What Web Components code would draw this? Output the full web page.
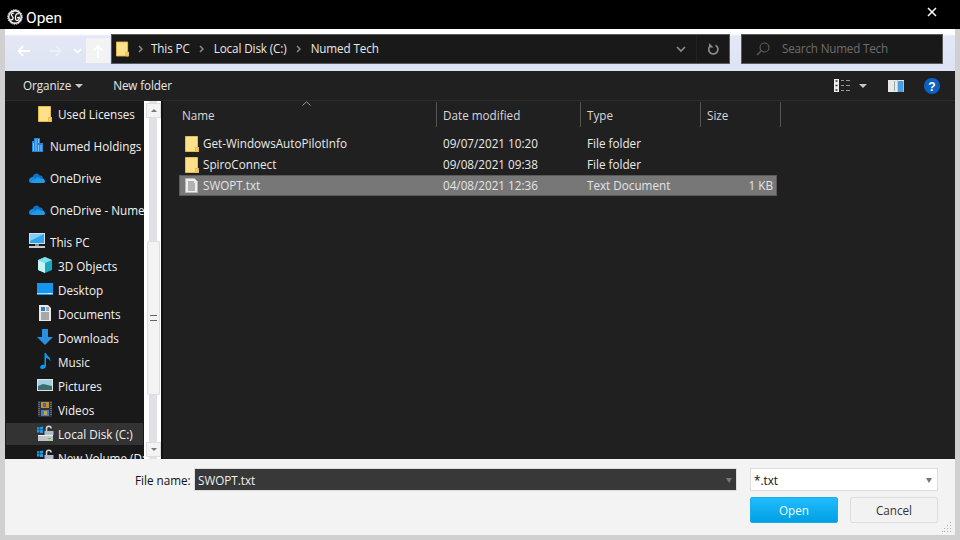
<!DOCTYPE html>
<html lang="en"><head><meta charset="utf-8"><title>Open</title>
<style>
html,body{margin:0;padding:0;background:#d0d0d0}
body{width:960px;height:540px;overflow:hidden;font:11.7px "Open Sans","Noto Sans",sans-serif}
</style></head><body>
<x-dialog>
  <x-titlebar slot="title">Open</x-titlebar>
  <x-navbar slot="nav"></x-navbar>
  <x-toolbar slot="tools"></x-toolbar>
  <x-sidebar slot="side"></x-sidebar>
  <x-filelist slot="main"></x-filelist>
  <x-footer slot="foot"></x-footer>
</x-dialog>
<script>
const FONT='"Open Sans","Noto Sans",sans-serif';
const FS='11.7px';
const folder=(w=14,h=16)=>`<svg width="${w}" height="${h}" viewBox="0 0 14 16" style="display:block;flex:none"><path d="M.5.5H12.500V11.500H13.500V15.500H.5Z" fill="#fde08a" stroke="#e8bd47"/><path d="M10.500 11.500H13.500V15.500H10.500Z" fill="#f3cd62" stroke="#e8bd47"/></svg>`;
const def=(name,css,html,init)=>customElements.define(name,class extends HTMLElement{
  constructor(){super();this.attachShadow({mode:'open'}).innerHTML=`<style>${css}</style>${html}`;}
  connectedCallback(){init&&init.call(this)}
});

def('x-dialog',`:host{display:grid;width:960px;height:540px;grid-template-rows:29px 42px 30px 358px 76px 5px;grid-template-columns:5px 950px 5px;background:#d0d0d0}
  ::slotted([slot=title]){grid-column:1/4;grid-row:1}
  ::slotted([slot=nav]){grid-column:2;grid-row:2}
  ::slotted([slot=tools]){grid-column:2;grid-row:3}
  ::slotted([slot=foot]){grid-column:2;grid-row:5}
  .body{grid-column:2;grid-row:4;display:flex;min-height:0}`,
 `<slot name="title"></slot><slot name="nav"></slot><slot name="tools"></slot><div class="body"><slot name="side"></slot><slot name="main"></slot></div><slot name="foot"></slot>`);

def('x-titlebar',`:host{display:flex;align-items:flex-start;background:#000;color:#fff;font:15.500px "Roboto",sans-serif;padding:0 0 0 7px}
  .t{flex:1;margin:9px 0 0 3px;line-height:18px}.x{width:10px;height:10px;margin:7px 23px 0 0}
  .l{margin-top:9px}
  svg{display:block}`,
 `<svg class="l" width="16" height="16" viewBox="0 0 16 16"><circle cx="8" cy="8" r="7" fill="#fff"/><circle cx="8" cy="8" r="7.300" fill="none" stroke="#fff" stroke-width="1" stroke-dasharray="1.300 1"/><circle cx="8" cy="8" r="5.600" fill="#1a1a1a"/><path d="M6.800 4.300C5 3.900 3.700 5.300 4.700 6.600 5.700 7.900 6.600 8.200 6 9.800 5.500 11.300 3.900 11 3.600 10M12 4.800C10.200 4 8.800 5.400 8.500 7.500 8.300 9.700 8.600 11.600 10.200 11.500 11.700 11.400 12.500 9.800 12.300 8.400 11.500 8.800 10.700 9 10 8.600" fill="none" stroke="#fff" stroke-width="1.200"/></svg><span class="t"><slot></slot></span>
 <svg class="x" viewBox="0 0 10 10"><path d="M1 1L9 9M9 1L1 9" stroke="#fff" stroke-width="1.500" fill="none"/></svg>`);

const sep=(l,r)=>`<svg style="margin:0 ${r}px 0 ${l}px;flex:none" width="5" height="8" viewBox="0 0 5 8"><path d="M1 1l3 3-3 3" fill="none" stroke="#8a8a8a" stroke-width="1.500"/></svg>`;
def('x-navbar',`:host{display:flex;align-items:flex-start;height:42px;background:linear-gradient(#ffffff 0,#ffffff 5px,#e4e8f6 7px,#dde3f3 100%);box-sizing:border-box;padding:5px 0 0 11px}
  .btns{display:flex;align-items:center;height:25px;margin-top:4px}
  .btns svg{display:block;flex:none}
  .up{width:24px;height:25px;background:#f3f3f3;display:flex;align-items:center;justify-content:center;margin-left:4px}
  .addr{width:619px;height:30px;margin-left:1px;background:#191919;border:1px solid #5a5a5a;box-sizing:border-box;display:flex;align-items:center;color:#e8e8e8;font:${FS} ${FONT};letter-spacing:-.12px;padding-left:4px;flex:none}
  .crumbs{display:flex;align-items:center;flex:1;height:100%}
  .crumbs span{padding-bottom:2px}
  .chev{margin-right:10px}
  .rf{width:33px;height:100%;border-left:1px solid #222;box-sizing:border-box;display:flex;align-items:center;justify-content:center}
  .search{width:202px;height:30px;margin-left:11px;background:#191919;border:1px solid #5a5a5a;box-sizing:border-box;display:flex;align-items:center;color:#6d6d6d;font:${FS} ${FONT};letter-spacing:-.2px;gap:12px;padding-left:14px;flex:none}
  .search span{padding-bottom:2px}`,
 `<div class="btns">
   <svg width="16" height="16" viewBox="0 0 16 16"><path d="M14 8H2.500M7 3.200L2.500 8 7 12.800" fill="none" stroke="#fff" stroke-width="1.800"/></svg>
   <svg width="16" height="16" viewBox="0 0 16 16" style="margin-left:15px"><path d="M2 8h11.500M9 3.200L13.500 8 9 12.800" fill="none" stroke="#eef0f8" stroke-width="1.800"/></svg>
   <svg width="9" height="6" viewBox="0 0 9 6" style="margin-left:10px"><path d="M1 1l3.500 3.500L8 1" fill="none" stroke="#fff" stroke-width="1.600"/></svg>
   <div class="up"><svg width="12" height="14" viewBox="0 0 12 14"><path d="M6 13.500V2M1.500 6.500L6 2l4.500 4.500" fill="none" stroke="#fff" stroke-width="1.700"/></svg></div>
  </div>
  <div class="addr"><div class="crumbs">${folder(13,16)}${sep(9,8)}<span>This PC</span>${sep(9,10)}<span>Local Disk (C:)</span>${sep(9,10)}<span>Numed Tech</span></div>
   <svg class="chev" width="10" height="7" viewBox="0 0 10 7"><path d="M1 1l4 4 4-4" fill="none" stroke="#8a8a8a" stroke-width="1.700"/></svg>
   <div class="rf"><svg width="13" height="13" viewBox="0 0 13 13"><path d="M8.500 2.300A4.600 4.600 0 1 1 3.200 3" fill="none" stroke="#8a8a8a" stroke-width="1.700"/><path d="M2 0v4.500h4.500z" fill="#8a8a8a"/></svg></div></div>
  <div class="search"><svg width="14" height="14" viewBox="0 0 14 14"><circle cx="8.500" cy="5.500" r="4.500" fill="none" stroke="#5f5f5f" stroke-width="1.100"/><path d="M5 9l-4 4" stroke="#5f5f5f" stroke-width="1.300"/></svg><span>Search Numed Tech</span></div>`);

def('x-toolbar',`:host{display:flex;align-items:center;background:#202020;color:#e8e8e8;font:${FS} ${FONT};height:30px;box-sizing:border-box;border-bottom:1px solid #2b2b2b;padding:0 15px 0 18px}
  .a{display:flex;align-items:center;gap:4px}.nf{margin-left:30px;flex:1;padding-bottom:2px;letter-spacing:-.12px}
  .lbl{padding-bottom:2px;letter-spacing:-.08px}
  .tri{width:0;height:0;border:4.500px solid transparent;border-top:4.500px solid #c8c8c8;border-bottom:0}
  svg{display:block}`,
 `<div class="a"><span class="lbl">Organize</span><span class="tri"></span></div><div class="nf">New folder</div>
 <div class="a" style="gap:9px"><svg width="16" height="13" viewBox="0 0 16 13"><rect width="5" height="13" fill="#eee"/><path d="M1.500 2h2M1.500 6.500h2M1.500 11h2" stroke="#333" stroke-width="1.500"/><path d="M7 1.500h3M12 1.500h4M7 6.500h3M12 6.500h4M7 11.500h3M12 11.500h4" stroke="#999"/></svg><span class="tri"></span></div>
 <svg style="margin-left:21px" width="16" height="12" viewBox="0 0 16 12"><rect width="16" height="12" fill="#e8e8e8"/><rect x="9.500" y="1" width="6" height="11" fill="#4a9de0"/><rect x="6" y="1" width="1" height="10" fill="#9aa"/><rect x="9" y="0" width="1" height="12" fill="#ccc"/></svg>
 <svg style="margin-left:20px" width="16" height="16" viewBox="0 0 16 16"><circle cx="8" cy="8" r="8" fill="#0b62c4"/><text x="8" y="12.500" text-anchor="middle" fill="#fff" font-family="Liberation Sans" font-weight="700" font-size="12">?</text></svg>`);

const I={
 org:`<svg width="11" height="14" viewBox="0 0 11 14"><path d="M0 3h2V0h6v5h3v9H0z" fill="#1e86e0"/><path d="M3.500 2h1M6 2h1M3.500 4h1M6 4h1M1 6h1M1 8h1M1 10h1M1 12h1M3.500 6h1M3.500 8h1M6 8h1M8.500 8h1M3.500 10h1M6 10h1M8.500 10h1M3.500 12h1M6 12h1M8.500 12h1" stroke="#fff"/></svg>`,
 cloud:`<svg width="16" height="10" viewBox="0 0 16 10"><path d="M4 3C5 0 9-.5 10.500 2.500 13 2 14 3.500 14 5.500H3.500z" fill="#0f6fc6"/><path d="M3.500 4C5 3.500 5.500 4.500 6 5.500L5.500 10H2.500C.5 10 0 8.500 0 7.500 0 5.500 2 4 3.500 4z" fill="#1789df"/><path d="M6 6C8 3.500 10 4 11 5.500 13 5 16 5.500 16 8.500 16 9.500 15 10 14.500 10H3.500C2 10 3 7 6 6z" fill="#1f9ce8"/></svg>`,
 pc:`<svg width="16" height="15" viewBox="0 0 16 15"><rect width="16" height="11" fill="#d9dde0"/><rect x="1" y="1" width="14" height="9" fill="#2fa5ee"/><path d="M1 1h14L1 8z" fill="#7fd0f7"/><rect x="6" y="11" width="4" height="2" fill="#7b8a95"/><rect y="13" width="16" height="2" fill="#c8ccd0"/></svg>`,
 d3:`<svg width="16" height="16" viewBox="0 0 16 16"><path d="M8 0l7 3v10l-7 3-7-3V3z" fill="#1aa8c0"/><path d="M1 3l7 3 7-3-7-3z" fill="#7fe0e8"/><path d="M1 3l7 3v10l-7-3z" fill="#c5f4f5"/></svg>`,
 desk:`<svg width="16" height="12" viewBox="0 0 16 12"><rect width="16" height="12" fill="#1496ee"/><rect y="10" width="16" height="1" fill="#a9dbfa"/><rect x="11" y="10" width="3" height="1" fill="#fff"/></svg>`,
 doc:`<svg width="12" height="16" viewBox="0 0 12 16"><path d="M0 0h9l3 3v13H0z" fill="#e9e9e9"/><path d="M2 8h8M2 10h8M2 12h8M2 14h8M7 3h3M7 5h3" stroke="#666"/><rect x="2" y="2" width="4" height="4" fill="#2a80d0"/></svg>`,
 dl:`<svg width="16" height="16" viewBox="0 0 16 16"><path d="M5 0h6v8h5l-8 8-8-8h5z" fill="#2a8fe0"/></svg>`,
 music:`<svg width="11" height="16" viewBox="0 0 11 16"><path d="M4.500 0H6c.5 3 5 4 4.500 8.500C10 6.500 8 5.500 6 5v8c0 2-2 3-3.800 3C.5 16-.5 14.500.5 13.200 1.500 12 3.500 11.500 4.500 12z" fill="#0a9bee"/></svg>`,
 pic:`<svg width="16" height="12" viewBox="0 0 16 12"><rect width="16" height="12" fill="#e4e4e4"/><rect x="1" y="1" width="14" height="10" fill="#a3cfe4"/><path d="M1 7l5-2 9 2v4H1z" fill="#3c6e70"/></svg>`,
 vid:`<svg width="14" height="16" viewBox="0 0 14 16"><rect width="14" height="16" fill="#2b3240"/><rect x="3" y="1" width="8" height="6" fill="#c08f2e"/><rect x="5" y="2" width="3" height="4" fill="#4a5fb8"/><rect x="3" y="9" width="8" height="6" fill="#4a7fb8"/><rect x="6" y="10" width="3" height="4" fill="#d0a040"/><path d="M1 1v14M13 1v14" stroke="#aaa" stroke-dasharray="1 1"/></svg>`,
 disk:`<svg width="17" height="16" viewBox="0 0 17 16"><path d="M0 2.500l2.500-.5v2.500H0zM3 2l3-.5v3H3zM0 5h2.500v2.500H0zM3 5h3v3H3z" fill="#1e9be8"/><path d="M9.500 6V3.500a2.300 2.300 0 0 1 4.600 0" fill="none" stroke="#d5d8dc" stroke-width="1.500"/><rect x="7.500" y="6" width="9" height="4" fill="#aebccb"/><rect x="1" y="10" width="15" height="6" fill="#c4c4c4"/><rect x="1" y="10" width="15" height="1" fill="#eee"/><rect x="11" y="13" width="3" height="1" fill="#3bd14a"/></svg>`
};
const rows=[['f','Used Licenses',2],['org','Numed Holdings',1,0,1],['cloud','OneDrive',1,0,1],['cloud','OneDrive - Numed',1,0,1],['pc','This PC',1,0,1],['d3','3D Objects',2],['desk','Desktop',2],['doc','Documents',2],['dl','Downloads',2],['music','Music',2],['pic','Pictures',2],['vid','Videos',2],['disk','Local Disk (C:)',2,1],['disk','New Volume (D:)',2]];
def('x-nav-item',`:host{display:flex;height:24px;align-items:center;color:#f2f2f2;font:${FS} ${FONT};white-space:nowrap;overflow:hidden;box-sizing:border-box;flex:none}
  :host([lvl="2"]){padding-left:32px}
  :host([lvl="1"]){padding-left:24px}
  :host([sel]){background:linear-gradient(#333,#333) center/100% 22px no-repeat;margin:0 1px;padding-left:31px}
  :host([gap]){margin-top:8px}
  .i{width:16px;display:flex;justify-content:center;flex:none}
  .t{margin-left:5px}`,`<span class="i"><slot name="icon"></slot></span><span class="t"><slot></slot></span>`);
def('x-sidebar',`:host{display:flex;width:156px;flex:none;background:#191919;overflow:hidden;height:358px;border-right:2px solid #111;box-sizing:content-box}
  .list{width:139px;flex:none;overflow:hidden;padding-top:1px}
  .bar{width:17px;flex:none;background:#fff;box-sizing:border-box;display:flex;flex-direction:column;padding:2px 0 2px 2px;position:relative}
  .trk{position:absolute;left:5px;width:8px;top:0;bottom:0;background:#e0e0e6}
  .b{position:relative;width:15px;height:15px;background:#f3f3f3;border:1px solid #ddd;box-sizing:border-box;display:flex;align-items:center;justify-content:center}
  .tr{width:0;height:0;border:3.500px solid transparent;border-bottom:3px solid #777;border-top:0}
  .tr.d{border-bottom:0;border-top:3px solid #777}
  .th{position:absolute;left:3px;top:140px;width:13px;height:154px;background:#f3f3f3;border:1px solid #ddd;border-radius:2px;box-sizing:border-box;display:flex;align-items:center;justify-content:center}
  .g{width:7px;height:4px;border-top:1px solid #666;border-bottom:1px solid #666}
  .end{margin-top:auto}`,
 `<div class="list" id="l"></div><div class="bar"><div class="trk"></div><div class="b"><span class="tr"></span></div><div class="th"><span class="g"></span></div><div class="b end"><span class="tr d"></span></div></div>`,
 function(){const l=this.shadowRoot.getElementById('l');rows.forEach(([ic,t,lv,sel,gap])=>{const e=document.createElement('x-nav-item');e.setAttribute('lvl',lv);if(sel)e.setAttribute('sel','');if(gap)e.setAttribute('gap','');
  const s=document.createElement('span');s.slot='icon';s.style.display='block';s.innerHTML=ic=='f'?folder():I[ic];e.append(s,t);l.append(e)})});

def('x-file-row',`:host{display:grid;grid-template-columns:24px 240px 144px 116px 74px;height:21px;align-items:center;color:#eaeaea;font:${FS} ${FONT};box-sizing:border-box;width:598px;white-space:nowrap}
  :host([sel]){background:#777;box-shadow:inset 0 0 0 1px #5a5a5a;color:#e4e4e4}
  .i{padding-left:6px;display:block}
  .c{padding-bottom:2px}
  .r{text-align:right;padding-right:4px}`,
 `<span class="i"><slot name="icon"></slot></span><span class="c"><slot name="name"></slot></span><span class="c"><slot name="date"></slot></span><span class="c"><slot name="type"></slot></span><span class="c r"><slot name="size"></slot></span>`);
def('x-filelist',`:host{display:block;flex:1;background:#202020;font:${FS} ${FONT};min-width:0}
  .hd{display:grid;grid-template-columns:261px 144px 120px 80px;height:26px;color:#d8d8d8;position:relative;margin-left:13px;width:605px}
  .hd div{border-right:1px solid #555;padding:5px 0 0 6px;box-sizing:border-box;height:25px;margin-top:1px}
  .caret{position:absolute;left:126px;top:0}
  .rows{margin:6px 0 0 16px}`,
 `<div class="hd"><div>Name</div><div>Date modified</div><div>Type</div><div>Size</div><svg class="caret" width="9" height="5" viewBox="0 0 9 5"><path d="M.5 4.500L4.500 .8l4 3.700" fill="none" stroke="#9a9a9a"/></svg></div><div class="rows" id="r"></div>`,
 function(){const d=[['f','Get-WindowsAutoPilotInfo','09/07/2021 10:20','File folder',''],['f','SpiroConnect','09/08/2021 09:38','File folder',''],['t','SWOPT.txt','04/08/2021 12:36','Text Document','1 KB']];
  const T=`<svg width="13" height="15" viewBox="0 0 13 15" style="display:block"><path d="M.5.5h9l3 3v11H.5z" fill="#eee" stroke="#bbb"/><path d="M3 4h6M3 6h7M3 8h7M3 10h7M3 12h7" stroke="#777"/></svg>`;
  const host=this.shadowRoot.getElementById('r');d.forEach(r=>{const e=document.createElement('x-file-row');if(r[0]=='t')e.setAttribute('sel','');
   const mk=(s,c,h)=>{const n=document.createElement('span');n.slot=s;if(h)n.innerHTML=c;else n.textContent=c;e.append(n)};
   mk('icon',r[0]=='f'?folder(14,16):T,1);mk('name',r[1]);mk('date',r[2]);mk('type',r[3]);mk('size',r[4]);host.append(e)})});

def('x-footer',`:host{display:block;background:#f3f3f3;font:${FS} ${FONT};color:#111;position:relative;padding:9px 0 0 130px;box-sizing:border-box}
  .r1{display:flex;align-items:center;height:23px}
  .lb{width:59px;flex:none;padding-top:1px}
  .in{width:543px;height:23px;background:#383838;border:1px solid #ddd;box-sizing:border-box;color:#f0f0f0;display:flex;align-items:center;padding:1px 0 0 3px;flex:none}
  .tri{margin-left:auto;margin-right:4px;width:0;height:0;border:3px solid transparent;border-top:5px solid #777;border-bottom:0}
  .ty{width:188px;height:23px;background:#fff;border:1px solid #ddd;box-sizing:border-box;margin-left:13px;display:flex;align-items:center;padding:1px 0 0 3px;flex:none}
  .ty .tri{margin-right:5px}
  .r2{display:flex;margin:6px 0 0 615px;gap:12px}
  .btn{width:88px;height:26px;box-sizing:border-box;border-radius:2px;display:flex;align-items:center;justify-content:center;flex:none}
  .o{background:linear-gradient(#20bcff,#00a0e3);border:1px solid #19aeea;color:#f4fbff}
  .c{background:#f2f2f2;border:1px solid #ddd;color:#333}
  .grip{position:absolute;right:3px;bottom:3px}`,
 `<div class="r1"><span class="lb">File name:</span><div class="in">SWOPT.txt<span class="tri"></span></div><div class="ty">*.txt<span class="tri"></span></div></div>
 <div class="r2"><div class="btn o">Open</div><div class="btn c">Cancel</div></div>
 <svg class="grip" width="10" height="10" viewBox="0 0 10 10" fill="#aaa"><rect x="8" y="0" width="1" height="1"/><rect x="8" y="3" width="1" height="1"/><rect x="5" y="3" width="1" height="1"/><rect x="8" y="6" width="1" height="1"/><rect x="5" y="6" width="1" height="1"/><rect x="2" y="6" width="1" height="1"/><rect x="8" y="9" width="1" height="1"/><rect x="5" y="9" width="1" height="1"/><rect x="2" y="9" width="1" height="1"/><rect x="0" y="9" width="1" height="1"/></svg>`);
</script></body></html>
